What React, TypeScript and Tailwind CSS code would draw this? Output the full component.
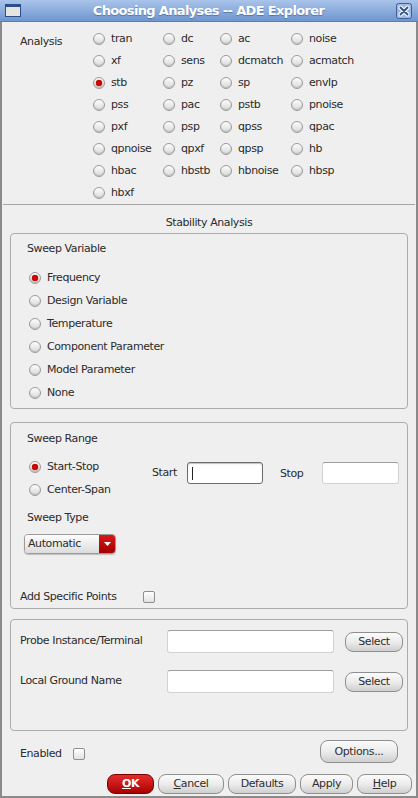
import React from 'react';

const font = { fontFamily: '"DejaVu Sans", Verdana, sans-serif' };

const analyses = [
  'tran', 'dc', 'ac', 'noise',
  'xf', 'sens', 'dcmatch', 'acmatch',
  'stb', 'pz', 'sp', 'envlp',
  'pss', 'pac', 'pstb', 'pnoise',
  'pxf', 'psp', 'qpss', 'qpac',
  'qpnoise', 'qpxf', 'qpsp', 'hb',
  'hbac', 'hbstb', 'hbnoise', 'hbsp',
  'hbxf',
];

const sweepVars = ['Frequency', 'Design Variable', 'Temperature', 'Component Parameter', 'Model Parameter', 'None'];

function Radio({ on }: { on?: boolean }) {
  return (
    <span className="relative inline-flex w-[12px] h-[12px] shrink-0 rounded-full border border-[#9b9b9b] bg-linear-to-b from-[#fdfdfd] to-[#d9d9d9] shadow-[inset_0_-1px_1px_rgba(0,0,0,0.15)] items-center justify-center">
      {on && <span className="w-[6px] h-[6px] rounded-full bg-[#d40000] shadow-[0_0_1px_#7a0000]" />}
    </span>
  );
}

function RadioItem({ label, on, className = '' }: { label: string; on?: boolean; className?: string }) {
  return (
    <div className={`flex items-center gap-[6px] ${className}`}>
      <Radio on={on} />
      <span className="pt-[1px]">{label}</span>
    </div>
  );
}

function Checkbox() {
  return <span className="inline-block w-[12px] h-[12px] rounded-[2px] border border-[#8e8e8e] bg-linear-to-b from-[#ffffff] to-[#e2e2e2]" />;
}

function Btn({ children, className = '' }: { children: React.ReactNode; className?: string }) {
  return (
    <div className={`flex items-center justify-center rounded-[8px] border border-[#8f8f8f] bg-linear-to-b from-[#fbfbfb] via-[#ececec] to-[#cfcfcf] text-[#2e2e2e] ${className}`}>
      {children}
    </div>
  );
}

function Field({ className = '', focus }: { className?: string; focus?: boolean }) {
  return (
    <div className={`relative bg-white rounded-[3px] border ${focus ? 'border-[#6e6e6e] shadow-[inset_0_1px_1px_rgba(0,0,0,0.25)]' : 'border-[#d2d2d2] border-t-[#9e9e9e]'} ${className}`}>
      {focus && <span className="absolute left-[4px] top-[4px] w-[1px] h-[13px] bg-[#222]" />}
    </div>
  );
}

export default function App() {
  return (
    <div className="w-[418px] h-[798px] flex flex-col text-[11px] text-[#2b2b2b] tracking-[-0.4px] bg-[#efefef]" style={font}>
      <div className="h-[22px] shrink-0 flex items-center bg-linear-to-b from-[#aac4ea] to-[#6f96cf] border-b border-[#5b7db3]">
        <svg width="16" height="13" viewBox="0 0 16 13" className="ml-[5px]">
          <rect x="0.5" y="0.5" width="15" height="12" fill="#e4e4e0" stroke="#2c4f8c" />
          <rect x="1" y="1" width="14" height="2" fill="#2c4f8c" />
        </svg>
        <div className="flex-1 text-center text-white font-bold text-[13px] tracking-[-0.65px] [text-shadow:0_1px_1px_rgba(40,70,120,0.5)]">
          Choosing Analyses -- ADE Explorer
        </div>
        <svg width="16" height="16" viewBox="0 0 16 16" className="mr-[6px]">
          <rect x="0.5" y="0.5" width="15" height="15" rx="2" fill="#9db8e2" stroke="#3f5f97" />
          <path d="M4.5 4.5 L11.5 11.5 M11.5 4.5 L4.5 11.5" stroke="#ffffff" strokeWidth="4" strokeLinecap="round" />
          <path d="M4.5 4.5 L11.5 11.5 M11.5 4.5 L4.5 11.5" stroke="#35558d" strokeWidth="2" strokeLinecap="round" />
        </svg>
      </div>

      <div className="flex-1 flex flex-col border-x-2 border-b-2 border-[#8a8a8a]">
        <div className="flex pt-[6px]">
          <div className="w-[91px] pl-[18px] pt-[6px] h-[22px]">Analysis</div>
          <div className="grid grid-cols-[70px_57px_71px_auto]">
            {analyses.map((a) => (
              <RadioItem key={a} label={a} on={a === 'stb'} className="h-[22px]" />
            ))}
          </div>
        </div>
        <div className="h-[1px] mx-[1px] bg-[#a6a6a6]" />
        <div className="h-[28px] pt-[11px] text-center leading-[14px]">Stability Analysis</div>

        <div className="mx-[8px] h-[176px] rounded-[4px] border border-[#acacac] pt-[8px]">
          <div className="ml-[16px] leading-[14px]">Sweep Variable</div>
          <div className="mt-[10px] ml-[18px]">
            {sweepVars.map((v, i) => (
              <RadioItem key={v} label={v} on={i === 0} className="h-[23px]" />
            ))}
          </div>
        </div>

        <div className="mx-[8px] mt-[13px] h-[187px] rounded-[4px] border border-[#acacac] pt-[9px]">
          <div className="ml-[16px] leading-[14px]">Sweep Range</div>
          <div className="flex mt-[9px]">
            <div className="ml-[18px] w-[123px]">
              <RadioItem label="Start-Stop" on className="h-[23px]" />
              <RadioItem label="Center-Span" className="h-[23px]" />
            </div>
            <div className="flex items-center h-[22px] mt-[7px]">
              <span className="w-[35px] pt-[1px]">Start</span>
              <Field focus className="w-[76px] h-[22px]" />
              <span className="ml-[17px] w-[42px] pt-[3px]">Stop</span>
              <Field className="w-[77px] h-[22px]" />
            </div>
          </div>
          <div className="ml-[16px] mt-[10px] leading-[14px]">Sweep Type</div>
          <div className="ml-[13px] mt-[9px] w-[92px] h-[20px] flex rounded-[4px] border border-[#9a9a9a] overflow-hidden shadow-[0_1px_1px_rgba(0,0,0,0.2)]">
            <div className="flex-1 flex items-center pl-[3px] pt-[1px] bg-linear-to-b from-[#fdfdfd] to-[#dcdcdc]">Automatic</div>
            <div className="w-[16px] flex items-center justify-center bg-linear-to-b from-[#d71818] to-[#a40000]">
              <svg width="7" height="4" viewBox="0 0 7 4"><path d="M0 0 L7 0 L3.5 4 Z" fill="#ffffff" /></svg>
            </div>
          </div>
          <div className="flex items-center ml-[9px] mt-[36px] h-[14px]">
            <span className="w-[123px] pt-[1px]">Add Specific Points</span>
            <Checkbox />
          </div>
        </div>

        <div className="mx-[8px] mt-[10px] h-[112px] rounded-[4px] border border-[#acacac] pt-[10px]">
          <div className="flex items-center h-[22px]">
            <span className="ml-[9px] w-[147px] pt-[1px]">Probe Instance/Terminal</span>
            <Field className="w-[167px] h-[23px]" />
            <Btn className="ml-[11px] w-[58px] h-[20px] mt-[1px] pt-[1px]">Select</Btn>
          </div>
          <div className="flex items-center h-[22px] mt-[18px]">
            <span className="ml-[9px] w-[147px] pt-[1px]">Local Ground Name</span>
            <Field className="w-[167px] h-[23px]" />
            <Btn className="ml-[11px] w-[58px] h-[20px] mt-[1px] pt-[1px]">Select</Btn>
          </div>
        </div>

        <div className="flex items-center mt-[9px] h-[23px]">
          <div className="flex items-center ml-[18px] mt-[5px]">
            <span className="w-[53px]">Enabled</span>
            <Checkbox />
          </div>
          <Btn className="ml-auto mr-[18px] w-[78px] h-[23px] pt-[1px]">Options...</Btn>
        </div>

        <div className="flex justify-end gap-[4px] mt-[11px] mr-[4px]">
          <div className="w-[47px] h-[20px] pt-[1px] flex items-center justify-center rounded-[8px] border border-[#7a0000] bg-linear-to-b from-[#e42a2a] to-[#a80000] text-white font-bold">
            <span><span className="underline">O</span>K</span>
          </div>
          <Btn className="w-[66px] h-[20px] pt-[1px]"><span><span className="underline">C</span>ancel</span></Btn>
          <Btn className="w-[68px] h-[20px] pt-[1px]">Defaults</Btn>
          <Btn className="w-[53px] h-[20px] pt-[1px]">Apply</Btn>
          <Btn className="w-[55px] h-[20px] pt-[1px]"><span><span className="underline">H</span>elp</span></Btn>
        </div>
      </div>
    </div>
  );
}
